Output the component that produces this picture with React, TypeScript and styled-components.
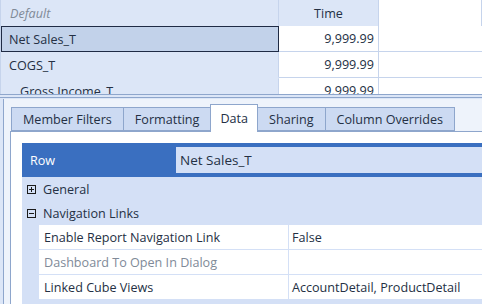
import React from 'react';
import styled, {createGlobalStyle} from 'styled-components';

const colors = {
  pale: '#dce6f7',
  paleLine: '#c6d4ec',
  selected: '#c2d2ea',
  dark: '#1f2b45',
  text: '#243044',
  grey: '#808a98',
  frame: '#8ea6cc',
  tab: '#ccdaf2',
  band: '#3a6fc0',
  prop: '#d4e0f6',
  white: '#ffffff',
};

const GlobalStyle = createGlobalStyle`
  html, body {
    margin: 0;
    padding: 0;
    background: ${colors.pale};
  }
  body {
    font-family: "Open Sans", "Noto Sans", sans-serif;
    font-size: 12.6px;
    color: ${colors.text};
  }
`;

const Page = styled.div`
  width: 482px;
  height: 304px;
  overflow: hidden;
  display: flex;
  flex-direction: column;
  background: ${colors.pale};
`;

const Grid = styled.div`
  height: 94px;
  overflow: hidden;
  display: grid;
  grid-template-columns: 278px 100px 1fr;
  grid-auto-rows: 26px;
  border-left: 1px solid ${colors.paleLine};
`;

const HeaderCell = styled.div<{$align?: string; $blank?: boolean}>`
  height: 27px;
  box-sizing: border-box;
  display: flex;
  align-items: center;
  justify-content: ${p => p.$align || 'flex-start'};
  padding: 0 9px;
  background: ${p => (p.$blank ? colors.white : colors.pale)};
  border-bottom: 1px solid ${colors.paleLine};
  border-right: 1px solid ${colors.paleLine};
`;

const Hint = styled.span`
  font-style: italic;
  color: ${colors.grey};
`;

const NameCell = styled.div<{$selected?: boolean; $indent?: number}>`
  box-sizing: border-box;
  display: flex;
  align-items: center;
  padding-left: ${p => 7 + (p.$indent || 0)}px;
  background: ${p => (p.$selected ? colors.selected : colors.pale)};
  border: 1px solid ${p => (p.$selected ? colors.dark : 'transparent')};
  border-right: 1px solid ${p => (p.$selected ? colors.dark : colors.paleLine)};
  white-space: nowrap;
`;

const ValueCell = styled.div`
  box-sizing: border-box;
  display: flex;
  align-items: center;
  justify-content: flex-end;
  padding-right: 4px;
  background: ${colors.white};
  border-bottom: 1px solid ${colors.paleLine};
  border-right: 1px solid ${colors.paleLine};
`;

const EmptyCell = styled.div`
  background: ${colors.white};
  border-bottom: 1px solid ${colors.paleLine};
`;

const Splitter = styled.div`
  height: 2px;
  border-top: 1px solid ${colors.frame};
  border-bottom: 1px solid ${colors.frame};
  background: ${colors.pale};
  margin-bottom: 1px;
`;

const Panel = styled.div`
  flex: 1;
  margin-left: 3px;
  padding: 4px 0 0 6px;
  border-left: 1px solid ${colors.frame};
  background: #eef3fb;
  display: flex;
  flex-direction: column;
  min-height: 0;
`;

const TabStrip = styled.div`
  display: flex;
  align-items: flex-end;
  height: 28px;
  padding-left: 2px;
  position: relative;
  z-index: 1;
`;

const Tab = styled.div<{$active?: boolean}>`
  box-sizing: border-box;
  height: ${p => (p.$active ? 28 : 24)}px;
  padding: 0 ${p => (p.$active ? 9 : 11)}px;
  display: flex;
  align-items: center;
  background: ${p => (p.$active ? colors.white : colors.tab)};
  border: 1px solid ${colors.frame};
  border-bottom: ${p => (p.$active ? 'none' : `1px solid ${colors.frame}`)};
  margin-left: -1px;
  margin-bottom: ${p => (p.$active ? -1 : 0)}px;
  white-space: nowrap;
`;

const TabPage = styled.div`
  flex: 1;
  background: ${colors.white};
  border-left: 1px solid ${colors.frame};
  border-top: 1px solid ${colors.frame};
  padding: 11px 0 0 11px;
  min-height: 0;
`;

const PropGrid = styled.div`
  background: ${colors.prop};
  height: 100%;
  display: flex;
  flex-direction: column;
`;

const Band = styled.div`
  display: grid;
  grid-template-columns: 154px 1fr;
  align-items: stretch;
  height: 34px;
  box-sizing: border-box;
  padding: 4px 0 4px 0;
  background: ${colors.band};
`;

const BandLabel = styled.div`
  display: flex;
  align-items: center;
  padding-left: 8px;
  color: ${colors.white};
`;

const BandValue = styled.div`
  display: flex;
  align-items: center;
  padding-left: 4px;
  background: ${colors.prop};
  font-size: 13.5px;
`;

const Category = styled.div`
  display: flex;
  align-items: center;
  gap: 7px;
  height: 24px;
  padding-left: 5px;
`;

const Toggle = styled.span`
  width: 9px;
  height: 9px;
  box-sizing: border-box;
  border: 1px solid #1b1b1b;
  position: relative;
  &::before,
  &::after {
    content: '';
    position: absolute;
    background: #1b1b1b;
  }
  &::before {
    left: 1px;
    right: 1px;
    top: 3px;
    height: 1px;
  }
`;

const PlusToggle = styled(Toggle)`
  &::after {
    top: 1px;
    bottom: 1px;
    left: 3px;
    width: 1px;
  }
`;

const Rows = styled.div`
  margin-left: 17px;
  display: flex;
  flex-direction: column;
`;

const PropRow = styled.div`
  display: grid;
  grid-template-columns: 250px 1fr;
  height: 25px;
  box-sizing: border-box;
  border-bottom: 1px solid ${colors.prop};
  background: ${colors.white};
`;

const PropName = styled.div<{$muted?: boolean}>`
  display: flex;
  align-items: center;
  padding-left: 5px;
  color: ${p => (p.$muted ? colors.grey : colors.text)};
  border-right: 1px solid ${colors.prop};
  white-space: nowrap;
`;

const PropValue = styled.div`
  display: flex;
  align-items: center;
  padding-left: 3px;
  white-space: nowrap;
`;

const rows = [
  {name: 'Net Sales_T', value: '9,999.99', selected: true, indent: 0},
  {name: 'COGS_T', value: '9,999.99', selected: false, indent: 0},
  {name: 'Gross Income_T', value: '9,999.99', selected: false, indent: 11},
];

const tabs = ['Member Filters', 'Formatting', 'Data', 'Sharing', 'Column Overrides'];

const props = [
  {name: 'Enable Report Navigation Link', value: 'False', muted: false},
  {name: 'Dashboard To Open In Dialog', value: '', muted: true},
  {name: 'Linked Cube Views', value: 'AccountDetail, ProductDetail', muted: false},
];

export default function App() {
  return (
    <Page>
      <GlobalStyle />
      <Grid>
        <HeaderCell>
          <Hint>Default</Hint>
        </HeaderCell>
        <HeaderCell $align="center">Time</HeaderCell>
        <HeaderCell $blank />
        {rows.map(r => (
          <React.Fragment key={r.name}>
            <NameCell $selected={r.selected} $indent={r.indent}>
              {r.name}
            </NameCell>
            <ValueCell>{r.value}</ValueCell>
            <EmptyCell />
          </React.Fragment>
        ))}
      </Grid>
      <Splitter />
      <Panel>
        <TabStrip>
          {tabs.map(t => (
            <Tab key={t} $active={t === 'Data'}>
              {t}
            </Tab>
          ))}
        </TabStrip>
        <TabPage>
          <PropGrid>
            <Band>
              <BandLabel>Row</BandLabel>
              <BandValue>Net Sales_T</BandValue>
            </Band>
            <Category>
              <PlusToggle />
              General
            </Category>
            <Category>
              <Toggle />
              Navigation Links
            </Category>
            <Rows>
              {props.map(p => (
                <PropRow key={p.name}>
                  <PropName $muted={p.muted}>{p.name}</PropName>
                  <PropValue>{p.value}</PropValue>
                </PropRow>
              ))}
            </Rows>
          </PropGrid>
        </TabPage>
      </Panel>
    </Page>
  );
}
